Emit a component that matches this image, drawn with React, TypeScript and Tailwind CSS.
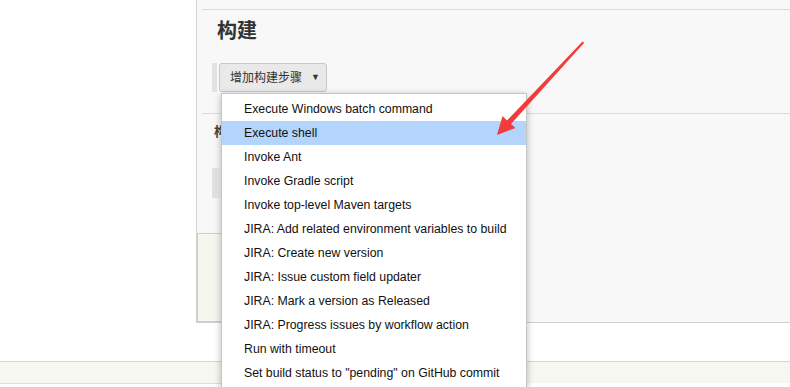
const ITEMS = [
  "Execute Windows batch command",
  "Execute shell",
  "Invoke Ant",
  "Invoke Gradle script",
  "Invoke top-level Maven targets",
  "JIRA: Add related environment variables to build",
  "JIRA: Create new version",
  "JIRA: Issue custom field updater",
  "JIRA: Mark a version as Released",
  "JIRA: Progress issues by workflow action",
  "Run with timeout",
  'Set build status to "pending" on GitHub commit',
];

const cjk = "font-['Liberation_Sans','Noto_Sans_CJK_SC',sans-serif]";

function BuildMenu() {
  return (
    <div className="absolute left-[221px] top-[93px] w-[306px] border border-[#c6c6c6] bg-white pb-[30px] pt-[3px] shadow-[0_2px_7px_rgba(0,0,0,0.28)]">
      {ITEMS.map((item, i) => (
        <div
          key={item}
          className={
            "flex h-[24px] items-center pl-[22px] text-[12.3px] text-[#111] " + (i === 1 ? "bg-[#b3d4fc]" : "")
          }
        >
          {item}
        </div>
      ))}
    </div>
  );
}

function Arrow() {
  return (
    <svg className="pointer-events-none absolute left-0 top-0" width="790" height="387">
      <polygon
        points="583.5,42 584,43 511,124 515.5,128 497,135 502.5,116 507,120.5 582.5,41.5"
        fill="#f23b3b"
      />
    </svg>
  );
}

export default function App() {
  return (
    <div className={`relative h-[387px] w-[790px] overflow-hidden bg-white ${cjk}`}>
      <div className="flex h-[323px]">
        <div className="w-[196px] shrink-0 bg-white" />
        <div className="flex flex-1 flex-col border-b border-l border-[#d0d0d0] bg-[#f8f8f8]">
          <div className="ml-[5px] mt-[9px] border-t border-[#dcdcdc]" />
          <h2 className="mt-[9px] pl-[20px] text-[20px] font-bold leading-[24px] text-[#333]">构建</h2>
          <div className="mt-[20px] flex h-[29px] items-stretch pl-[15px]">
            <div className="w-[5px] bg-[#e2e2e2]" />
            <button className="ml-[2px] flex w-[108px] items-center gap-[9px] rounded-[3px] border border-[#c8c8c8] bg-[#e9e9e9] pl-[10px] text-[12px] text-[#333]">
              增加构建步骤
              <span className="text-[9px]">▼</span>
            </button>
          </div>
          <div className="ml-[5px] mt-[21px] border-t border-[#dcdcdc]" />
          <div className="ml-[17px] mt-[10px] w-[7px] overflow-hidden whitespace-nowrap text-[13px] font-bold leading-[16px] text-[#444]">
            构
          </div>
          <div className="mt-[28px] flex h-[30px] pl-[15px]">
            <div className="w-[5px] bg-[#e2e2e2]" />
            <div className="w-[3px] bg-[#ececec]" />
          </div>
          <div className="mt-[35px] h-[89px] w-[290px] border border-[#c5d3c5] bg-[#f5f7ef]" />
        </div>
      </div>
      <div className="h-[38px] bg-white" />
      <div className="h-[22px] border-t border-[#d4d4d4] bg-[#f5f7f0]" />
      <div className="h-[10px] w-[253px] border-r border-t border-[#dedede] bg-white" />
      <BuildMenu />
      <Arrow />
    </div>
  );
}
